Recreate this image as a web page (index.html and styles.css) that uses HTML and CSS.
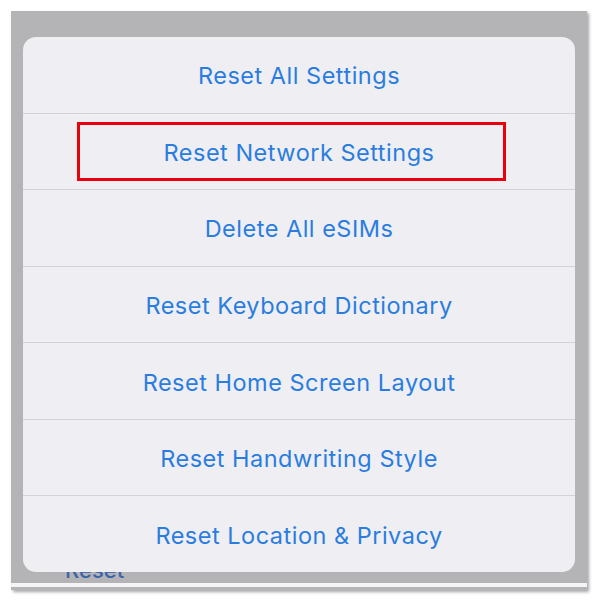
FILE: index.html
```html
<!DOCTYPE html>
<html>
<head>
<meta charset="utf-8">
<link rel="stylesheet" href="styles.css">
</head>
<body>
<div class="frame">
  <div class="behind">Reset</div>
  <div class="card">
    <div class="row">Reset All Settings</div>
    <div class="row marked">Reset Network Settings<span class="mark"></span></div>
    <div class="row">Delete All eSIMs</div>
    <div class="row">Reset Keyboard Dictionary</div>
    <div class="row">Reset Home Screen Layout</div>
    <div class="row">Reset Handwriting Style</div>
    <div class="row">Reset Location &amp; Privacy</div>
  </div>
  <div class="strip"></div>
</div>
</body>
</html>
```
FILE: styles.css
```css
html, body {
  margin: 0;
  padding: 0;
  background: #ffffff;
}
body {
  width: 600px;
  height: 603px;
  overflow: hidden;
  font-family: Inter, "Noto Sans", sans-serif;
}
.frame {
  position: relative;
  margin: 11px 0 0 11px;
  width: 576px;
  height: 579px;
  background: #b4b4b6;
  box-shadow: 2px 2px 3px rgba(0,0,0,0.35);
  padding: 26px 0 0 12px;
  box-sizing: border-box;
}
.card {
  position: relative;
  width: 552px;
  height: 535px;
  background: #efeff3;
  border-radius: 13px;
  display: flex;
  flex-direction: column;
  overflow: hidden;
}
.row {
  flex: 1;
  display: flex;
  align-items: center;
  justify-content: center;
  color: #2a7ddf;
  font-size: 23.5px;
  letter-spacing: 0.5px;
  border-bottom: 1px solid #d3d3d7;
  padding-top: 2px;
}
.row:last-child {
  border-bottom: none;
}
.marked {
  position: relative;
}
.mark {
  position: absolute;
  left: 54px;
  top: 8px;
  width: 429px;
  height: 59px;
  box-sizing: border-box;
  border: 3px solid #e8000c;
}
.behind {
  position: absolute;
  left: 54px;
  top: 546px;
  color: #3d63a8;
  font-size: 22px;
  font-weight: 500;
}
.strip {
  margin: 11px 0 0 -12px;
  width: 576px;
  height: 4px;
  background: #f4f4f6;
}
```
